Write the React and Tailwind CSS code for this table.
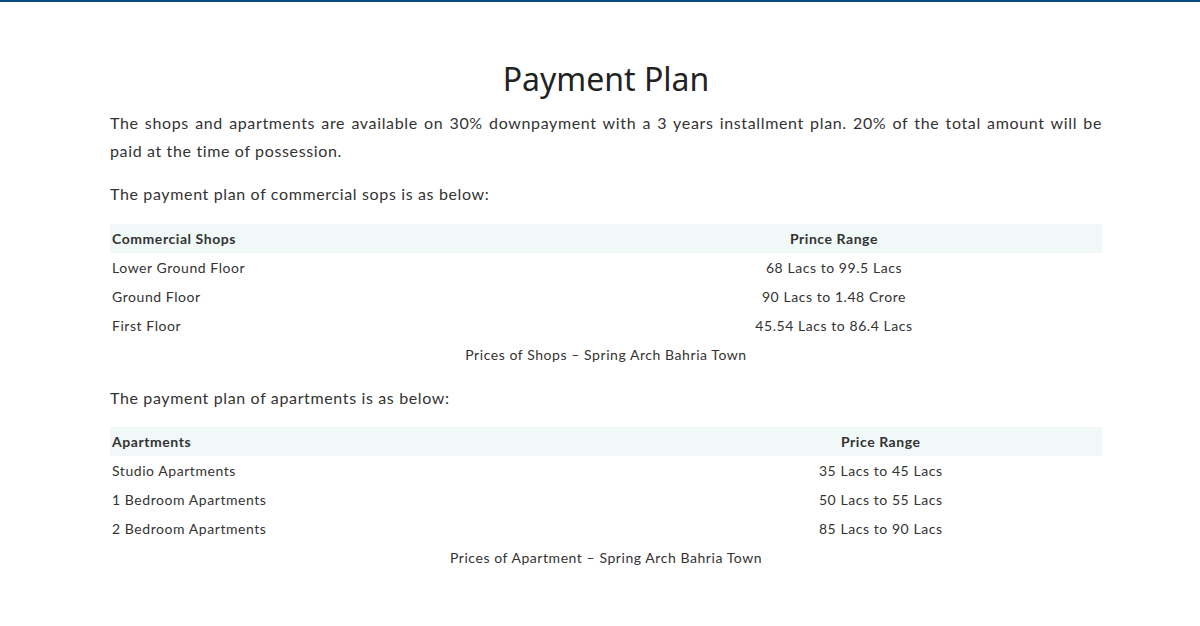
import React from "react";

const shops = [
  ["Lower Ground Floor", "68 Lacs to 99.5 Lacs"],
  ["Ground Floor", "90 Lacs to 1.48 Crore"],
  ["First Floor", "45.54 Lacs to 86.4 Lacs"],
];

const apartments = [
  ["Studio Apartments", "35 Lacs to 45 Lacs"],
  ["1 Bedroom Apartments", "50 Lacs to 55 Lacs"],
  ["2 Bedroom Apartments", "85 Lacs to 90 Lacs"],
];

const PriceTable = ({ head, rangeLabel, rows, caption }) => (
  <figure className="mb-[15px]">
    <table className="w-full border-collapse text-[14px] tracking-[0.04em] text-[#333]">
      <thead>
        <tr className="bg-[#f0f8f8]">
          <th className="h-[29px] px-[2px] text-left font-bold">{head}</th>
          <th className="h-[29px] px-[2px] text-center font-bold">
            {rangeLabel}
          </th>
        </tr>
      </thead>
      <tbody>
        {rows.map(([name, range]) => (
          <tr key={name}>
            <td className="h-[29px] px-[2px]">{name}</td>
            <td className="h-[29px] px-[2px] text-center">{range}</td>
          </tr>
        ))}
      </tbody>
    </table>
    <figcaption className="text-center text-[14px] tracking-[0.04em] leading-[29px] text-[#333]">
      {caption}
    </figcaption>
  </figure>
);

const App = () => {
  return (
    <div
      className="min-h-[626px] bg-white"
      style={{ fontFamily: "Lato, 'Noto Sans', sans-serif" }}
    >
      <div className="h-[2px] bg-[#0b4a80]" />
      <div className="ml-[110px] w-[992px] pt-[57px]">
        <h1
          className="text-center text-[32px] leading-[40px] text-[#222] mb-[10px]"
          style={{ fontFamily: "'Noto Sans', Lato, sans-serif" }}
        >
          Payment Plan
        </h1>
        <p className="text-justify text-[16px] tracking-[0.04em] leading-[28px] text-[#333] mb-[15px]">
          The shops and apartments are available on 30% downpayment with a 3
          years installment plan. 20% of the total amount will be paid at the
          time of possession.
        </p>
        <p className="text-[16px] tracking-[0.04em] leading-[28px] text-[#333] mb-[16px]">
          The payment plan of commercial sops is as below:
        </p>
        <PriceTable
          head="Commercial Shops"
          rangeLabel="Prince Range"
          rows={shops}
          caption="Prices of Shops – Spring Arch Bahria Town"
        />
        <p className="text-[16px] tracking-[0.04em] leading-[28px] text-[#333] mb-[15px]">
          The payment plan of apartments is as below:
        </p>
        <PriceTable
          head="Apartments"
          rangeLabel="Price Range"
          rows={apartments}
          caption="Prices of Apartment – Spring Arch Bahria Town"
        />
      </div>
    </div>
  );
};

export default App;
